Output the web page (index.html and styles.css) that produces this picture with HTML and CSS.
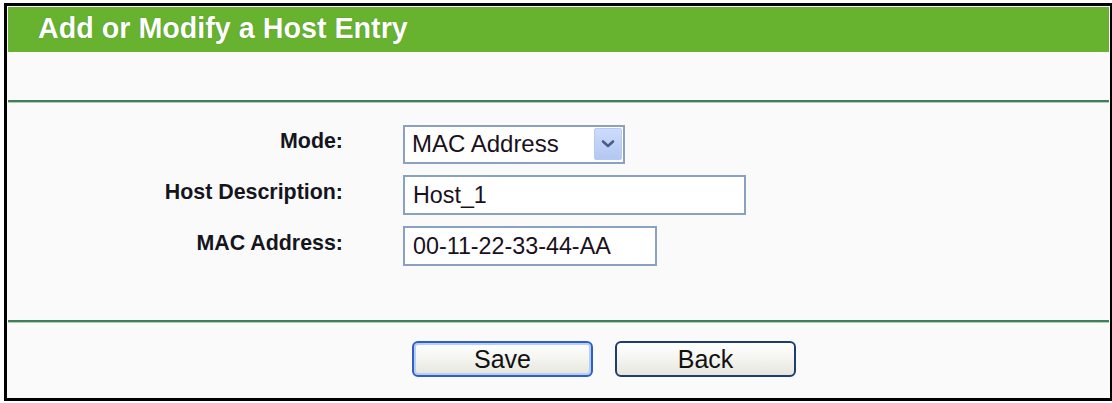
FILE: index.html
```html
<!DOCTYPE html>
<html>
<head>
	<title>Add or Modify a Host Entry</title>
	<link rel="stylesheet" href="styles.css">
</head>
<body>
	<div class="panel">
		<div class="title">Add or Modify a Host Entry</div>
		<div class="blank"></div>
		<div class="rule"></div>
		<div class="form">
			<div class="lbl">Mode:</div>
			<div class="sel">
				<span>MAC Address</span>
				<span class="arrow">
					<svg width="14" height="10" viewBox="0 0 14 10"><path d="M2 2.5 L7 7 L12 2.5" fill="none" stroke="#4a5f86" stroke-width="2.6" stroke-linecap="round" stroke-linejoin="round"/></svg>
				</span>
			</div>
			<div class="lbl">Host Description:</div>
			<div><input class="txt wide" type="text" value="Host_1"></div>
			<div class="lbl">MAC Address:</div>
			<div><input class="txt" type="text" value="00-11-22-33-44-AA"></div>
		</div>
		<div class="rule"></div>
		<div class="btns">
			<button class="btn def">Save</button>
			<button class="btn">Back</button>
		</div>
	</div>
</body>
</html>
```

FILE: styles.css
```css
body{
	margin:0;
	background:#fff;
	font-family:"Liberation Sans",Arial,sans-serif;
}
.panel{
	margin:3px 0 0 4px;
	width:1101px;
	height:390px;
	border:3px solid #000;
	padding:1px;
	box-sizing:content-box;
	background:#fafafa;
	display:flex;
	flex-direction:column;
}
.panel > *{
	flex:none;
}
.title{
	height:45px;
	line-height:42px;
	background:#67b32f;
	color:#fff;
	font-weight:bold;
	font-size:28.7px;
	padding-left:30px;
	text-shadow:0 0 1px #3f7a1c;
}
.blank{
	height:48px;
}
.rule{
	height:2px;
	background:#3f7d5c;
	border-bottom:1px solid #a9d6ae;
}
.form{
	display:grid;
	grid-template-columns:335px 1fr;
	column-gap:60px;
	row-gap:11px;
	grid-auto-rows:40px;
	align-items:center;
	padding:21px 0 54px 0;
}
.lbl{
	text-align:right;
	font-weight:bold;
	font-size:21.4px;
	color:#151520;
	margin-bottom:5px;
}
.sel{
	width:222px;
	height:39px;
	box-sizing:border-box;
	border:2px solid #8aa2bf;
	background:#fff;
	display:flex;
	align-items:center;
	justify-content:space-between;
	padding:0 1px 0 7px;
	font-size:24px;
	color:#1a1020;
}
.arrow{
	width:28px;
	height:32px;
	background:linear-gradient(#cddcfb,#b3c7f4);
	border:1px solid #b8c9ee;
	border-radius:2px;
	box-sizing:border-box;
	display:flex;
	align-items:center;
	justify-content:center;
}
.txt{
	display:block;
	width:254px;
	height:40px;
	box-sizing:border-box;
	border:2px solid #8aa2bf;
	background:#fff;
	padding:0 0 0 8px;
	margin:0;
	font-family:"Liberation Sans",Arial,sans-serif;
	font-size:23.3px;
	color:#1a1020;
	outline:none;
}
.wide{
	width:343px;
}
.btns{
	display:flex;
	gap:22px;
	padding:18px 0 0 404px;
}
.btn{
	width:181px;
	height:36px;
	margin:0;
	padding:0;
	border:2px solid #1f3d6e;
	border-radius:6px;
	background:linear-gradient(#ffffff,#f4f4f0 50%,#e6e5dc);
	font-family:"Liberation Sans",Arial,sans-serif;
	font-size:25px;
	color:#111;
	line-height:30px;
}
.def{
	border-color:#2f5fc4;
	box-shadow:inset 0 0 0 2px #b7cff7;
}
```
